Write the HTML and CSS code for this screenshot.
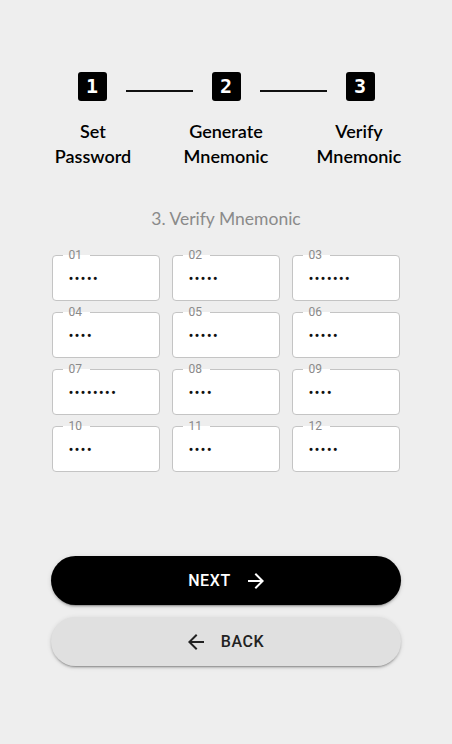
FILE: index.html
```html
<!DOCTYPE html>
<html>
<head>
<meta charset="utf-8">
<link rel="stylesheet" href="styles.css">
</head>
<body>
<div class="page">
  <div class="stepper">
    <div class="step-box">1</div>
    <div class="step-line"></div>
    <div class="step-box">2</div>
    <div class="step-line"></div>
    <div class="step-box">3</div>
  </div>
  <div class="step-labels">
    <div class="step-label">Set<br>Password</div>
    <div class="step-label">Generate<br>Mnemonic</div>
    <div class="step-label">Verify<br>Mnemonic</div>
  </div>
  <div class="title">3. Verify Mnemonic</div>
  <div class="grid">
    <div class="field"><span class="flabel">01</span><span class="dots">•••••</span></div>
    <div class="field"><span class="flabel">02</span><span class="dots">•••••</span></div>
    <div class="field"><span class="flabel">03</span><span class="dots">•••••••</span></div>
    <div class="field"><span class="flabel">04</span><span class="dots">••••</span></div>
    <div class="field"><span class="flabel">05</span><span class="dots">•••••</span></div>
    <div class="field"><span class="flabel">06</span><span class="dots">•••••</span></div>
    <div class="field"><span class="flabel">07</span><span class="dots">••••••••</span></div>
    <div class="field"><span class="flabel">08</span><span class="dots">••••</span></div>
    <div class="field"><span class="flabel">09</span><span class="dots">••••</span></div>
    <div class="field"><span class="flabel">10</span><span class="dots">••••</span></div>
    <div class="field"><span class="flabel">11</span><span class="dots">••••</span></div>
    <div class="field"><span class="flabel">12</span><span class="dots">•••••</span></div>
  </div>
  <div class="buttons">
    <button class="btn btn-next">NEXT
      <svg class="arrow" viewBox="0 0 24 24" width="24" height="24"><path d="M12 4l-1.41 1.41L16.17 11H4v2h12.17l-5.58 5.59L12 20l8-8z" fill="currentColor"/></svg>
    </button>
    <button class="btn btn-back">
      <svg class="arrow" viewBox="0 0 24 24" width="24" height="24"><path d="M20 11H7.83l5.59-5.59L12 4l-8 8 8 8 1.41-1.41L7.83 13H20v-2z" fill="currentColor"/></svg>
      BACK
    </button>
  </div>
</div>
</body>
</html>
```
FILE: styles.css
```css
html, body {
  margin: 0;
  padding: 0;
  background: #eeeeee;
}
.page {
  width: 452px;
  height: 744px;
  font-family: Lato, "Noto Sans", sans-serif;
  padding-top: 72px;
  box-sizing: border-box;
}
.stepper {
  display: flex;
  align-items: flex-start;
  justify-content: center;
  gap: 19px;
}
.step-box {
  width: 29px;
  height: 29px;
  border-radius: 3px;
  background: #000;
  color: #fff;
  font-family: "DejaVu Sans Mono", monospace;
  font-weight: bold;
  font-size: 20px;
  line-height: 29px;
  text-align: center;
}
.step-line {
  width: 67px;
  height: 2px;
  margin-top: 18px;
  background: #111;
}
.step-labels {
  display: grid;
  grid-template-columns: repeat(3, 133px);
  justify-content: center;
  margin-top: 18px;
}
.step-label {
  text-align: center;
  font-size: 18px;
  line-height: 25px;
  color: #000;
  font-weight: 600;
}
.title {
  text-align: center;
  font-size: 17.5px;
  color: #8a8a8a;
  margin-top: 38px;
  line-height: 24px;
}
.grid {
  display: grid;
  grid-template-columns: repeat(3, 108px);
  column-gap: 12px;
  row-gap: 11px;
  justify-content: center;
  margin-top: 24px;
  padding-right: 1px;
}
.field {
  position: relative;
  height: 46px;
  box-sizing: border-box;
  border: 1px solid #c4c4c4;
  border-radius: 4px;
  background: #fff;
  display: flex;
  align-items: center;
  padding-left: 16px;
}
.flabel {
  position: absolute;
  top: -8px;
  left: 10px;
  padding: 0 8px 0 6px;
  font-family: Roboto, sans-serif;
  font-size: 12px;
  line-height: 14px;
  color: #8a8a8a;
  background: linear-gradient(#eeeeee 0, #eeeeee 7px, #ffffff 7px);
}
.dots {
  font-family: Roboto, sans-serif;
  font-size: 15px;
  letter-spacing: 1px;
  color: #111;
  margin-top: 2px;
}
.buttons {
  display: flex;
  flex-direction: column;
  gap: 12px;
  padding: 0 51px;
  margin-top: 84px;
}
.btn {
  height: 49px;
  border: none;
  border-radius: 25px;
  font-family: Roboto, sans-serif;
  font-weight: 500;
  font-size: 16px;
  letter-spacing: 0.6px;
  display: flex;
  align-items: center;
  justify-content: center;
  gap: 13px;
  padding: 0;
  box-shadow: 0 3px 1px -2px rgba(0,0,0,0.2), 0 2px 2px 0 rgba(0,0,0,0.14), 0 1px 5px 0 rgba(0,0,0,0.12);
}
.btn-next {
  background: #000;
  color: #fff;
  padding-left: 4px;
}
.btn-back {
  background: #e0e0e0;
  color: #222;
  padding-right: 4px;
}
.arrow {
  display: block;
}
```
